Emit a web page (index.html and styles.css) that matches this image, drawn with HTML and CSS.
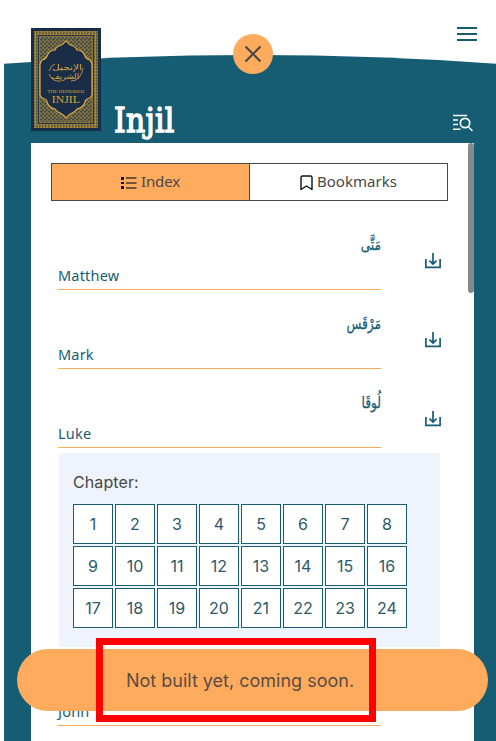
FILE: index.html
```html
<!DOCTYPE html>
<html lang="en">
<head>
<meta charset="utf-8">
<title>Injil</title>
<link rel="stylesheet" href="styles.css">
</head>
<body>
<svg class="defs" width="0" height="0" aria-hidden="true">
  <symbol id="download" viewBox="0 0 18 18">
    <path d="M1.9 7v8.4h14.2V7M9 1v10.8M5.4 8.7 9 12l3.6-3.3" fill="none" stroke="currentColor" stroke-width="1.7"/>
  </symbol>
</svg>
<div class="page">
  <svg class="curve" viewBox="0 0 492 10" preserveAspectRatio="none"><path d="M0 8.7Q123 0 248 0T492 8.7V10H0Z" fill="#165d74"/></svg>
  <header class="header">
    <svg class="cover" viewBox="0 0 70 103">
      <defs>
        <pattern id="weave" width="4" height="4" patternUnits="userSpaceOnUse">
          <rect width="4" height="4" fill="#3b4444"/>
          <path d="M0 0 4 4M4 0 0 4" stroke="#8f7b3c" stroke-width=".8"/>
          <path d="M2 0v1M0 2h1" stroke="#b18d3b" stroke-width=".7"/>
        </pattern>
        <pattern id="edge" width="3" height="3" patternUnits="userSpaceOnUse">
          <rect width="3" height="3" fill="#6b6139"/>
          <path d="M0 .5h2M1.5 1v2" stroke="#b6903b" stroke-width=".8"/>
        </pattern>
      </defs>
      <rect width="70" height="103" fill="#1a2d46"/>
      <rect x="3" y="3" width="64" height="97" fill="url(#edge)"/>
      <rect x="7.5" y="7.5" width="55" height="88" fill="url(#weave)" stroke="#25354a"/>
      <rect x="8.5" y="8.5" width="53" height="86" fill="none" stroke="#a58337" stroke-width=".5"/>
      <path d="M35 13Q38 17 42 18Q45 19 46 22Q52 22 54 28Q55 31 59 32L61 36V67L59 70Q54 71 54 74Q52 80 46 81Q44 84 41 85Q37 87 35 90Q33 87 29 85Q26 84 24 81Q18 80 16 74Q16 71 11 70L9 67V36L11 32Q15 31 16 28Q18 22 24 22Q25 19 28 18Q32 17 35 13Z" fill="#1a2d46" stroke="#e4ac42" stroke-width="1.2"/>
      <g fill="#dca640" text-anchor="middle">
        <text class="script" x="36" y="42" textLength="30" lengthAdjust="spacingAndGlyphs">الإنجيل</text>
        <text class="script" x="34" y="51" textLength="28" lengthAdjust="spacingAndGlyphs">الشريف</text>
        <text class="cover-small" x="34.7" y="65" textLength="37" lengthAdjust="spacingAndGlyphs">THE HONORED</text>
        <text class="cover-title" x="34.8" y="74.7" textLength="28" lengthAdjust="spacingAndGlyphs">INJIL</text>
      </g>
      <path d="M18 46Q21 54 30 53M40 53Q50 53 52 40M18 43Q20 37 24 36" fill="none" stroke="#dca640" stroke-width=".8"/>
    </svg>
    <h1 class="title">Injil</h1>
    <svg class="search" viewBox="0 0 22 18" fill="none" stroke="#fff" stroke-width="1.4"><path d="M1 1.5h14M1 6h5M1 10.5h5M1 15.2h7.5M16.5 13l4 4"/><circle cx="13" cy="9" r="4.7" stroke-width="1.7"/></svg>
  </header>
  <main class="panel">
    <nav class="tabs">
      <button class="tab active"><svg width="16" height="14" viewBox="0 0 16 14"><path d="M0 1h3v3H0zM0 6h3v2H0zM0 10h3v3H0z" fill="#111"/><path d="M5 2h10.5M5 7h10.5M5 12h10.5" stroke="#47372c" stroke-width="1.3"/></svg><span class="label-index">Index</span></button>
      <button class="tab"><svg width="13" height="16" viewBox="0 0 13 16"><path d="M1 14.5V2.5Q1 1 2.5 1h8Q12 1 12 2.5v12L6.5 11Z" fill="none" stroke="#111" stroke-width="1.4" stroke-linejoin="round"/></svg><span class="label-bookmarks">Bookmarks</span></button>
    </nav>
    <section class="books">
      <article class="book"><div class="names"><span class="arabic" lang="ar" dir="rtl">مَتَّى</span><span class="english">Matthew</span></div><svg class="download"><use href="#download"/></svg></article>
      <article class="book"><div class="names"><span class="arabic" lang="ar" dir="rtl">مَرْقَس</span><span class="english">Mark</span></div><svg class="download"><use href="#download"/></svg></article>
      <article class="book"><div class="names"><span class="arabic" lang="ar" dir="rtl">لُوقَا</span><span class="english">Luke</span></div><svg class="download"><use href="#download"/></svg></article>
      <div class="chapters">
        <p class="chapters-label">Chapter:</p>
        <div class="chapter-grid"><span>1</span><span>2</span><span>3</span><span>4</span><span>5</span><span>6</span><span>7</span><span>8</span><span>9</span><span>10</span><span>11</span><span>12</span><span>13</span><span>14</span><span>15</span><span>16</span><span>17</span><span>18</span><span>19</span><span>20</span><span>21</span><span>22</span><span>23</span><span>24</span></div>
      </div>
      <article class="book"><div class="names"><span class="english">John</span></div></article>
    </section>
    <div class="scrollbar"></div>
  </main>
  <button class="close" aria-label="Close"><svg width="18" height="18" viewBox="0 0 18 18"><path d="m1.5 1.5 15 15m0-15-15 15" stroke="#484747" stroke-width="2"/></svg></button>
  <button class="menu" aria-label="Menu"><i></i><i></i><i></i></button>
  <div class="toast" role="status">Not built yet, coming soon.</div>
  <div class="highlight"></div>
</div>
</body>
</html>
```
FILE: styles.css
```css
* { box-sizing: border-box; }
body { margin: 0; background: #fff; font-family: Inter, sans-serif; color: #484747; }
button { font: inherit; color: inherit; padding: 0; border: 0; background: none; }
.defs { position: absolute; }
.page { position: relative; height: 741px; padding: 55px 0 0 4px; overflow: hidden; display: flex; flex-direction: column; }
.curve { display: block; width: 492px; height: 10px; flex: none; }
.header { height: 78px; flex: none; background: #165d74; display: flex; align-items: flex-end; padding: 0 22px 12px 27px; }
.cover { width: 70px; height: 103px; flex: none; }
.title { margin: 0 auto -12px 13px; color: #fff; font: 33px/44px "DejaVu Serif Condensed", "DejaVu Serif", serif; font-stretch: condensed; letter-spacing: .3px; -webkit-text-stroke: 1.3px #fff; }
.search { width: 22px; height: 18px; margin-bottom: -1px; }
.script { font: 8px "DejaVu Sans", sans-serif; }
.cover-small { font: 5px "Liberation Serif", serif; }
.cover-title { font: 10px "Liberation Serif", serif; }
.panel { position: relative; flex: 1; min-height: 0; margin-right: 22px; border-left: 27px solid #165d74; background: #fff; padding: 20px 26px 0 20px; overflow: hidden; }
.page::after { content: ""; position: absolute; right: 0; top: 143px; bottom: 0; width: 22px; background: #165d74; }
.tabs { display: flex; height: 38px; border: 1px solid #484747; font: 15px/20px "Noto Sans", sans-serif; }
.tab { flex: 1; display: flex; align-items: center; justify-content: center; gap: 4px; padding-bottom: 3px; }
.tab svg { margin-top: 4px; }
.tab.active { background: #ffab5e; border-right: 1px solid #484747; }
.label-index { letter-spacing: -.1px; }
.label-bookmarks { letter-spacing: .05px; }
.books { padding: 10px 0 0 7px; }
.book { height: 79px; display: flex; align-items: flex-end; gap: 42px; }
.names { width: 323px; height: 79px; border-bottom: 1px solid #ffab5e; display: flex; flex-direction: column; justify-content: flex-end; color: #165d74; }
.arabic { font: 16px/24px "DejaVu Sans", sans-serif; margin-bottom: 8px; transform: scaleX(.76); transform-origin: right; -webkit-text-stroke: .3px #165d74; }
.english { font: 14.5px/20px "Noto Sans", sans-serif; letter-spacing: .2px; padding-bottom: 4px; height: 24px; }
.download { width: 20px; height: 18px; margin-bottom: 20px; color: #165d74; }
.chapters { width: 381px; height: 194px; margin: 5px 0 0 1px; padding: 16px 14px; background: #eff3fb; }
.chapters-label { margin: 0 0 8px; font-size: 16px; line-height: 27px; letter-spacing: .1px; }
.chapter-grid { display: grid; grid-template-columns: repeat(8, 40px); grid-auto-rows: 40px; gap: 2px; }
.chapter-grid span { display: flex; align-items: center; justify-content: center; border: 1px solid #165d74; background: #fff; color: #2c5968; font-size: 16px; }
.scrollbar { position: absolute; top: 0; right: 0; width: 6px; height: 150px; border-radius: 3px; background: #888; }
.close { position: absolute; left: 233px; top: 34px; width: 40px; height: 40px; border-radius: 50%; background: #ffab5e; display: flex; align-items: center; justify-content: center; }
.menu { position: absolute; left: 457px; top: 27px; width: 20px; display: grid; gap: 4px; }
.menu i { height: 2px; background: #165d74; }
.toast { position: absolute; z-index: 2; left: 17px; top: 649px; width: 471px; height: 62px; padding-right: 25px; border-radius: 31px; background: #ffab5e; color: #5a4c42; display: flex; align-items: center; justify-content: center; font-size: 18px; }
.highlight { position: absolute; z-index: 3; left: 96px; top: 638px; width: 280px; height: 84px; border: 7px solid #f00; box-shadow: inset 0 2px #fff; }
```
